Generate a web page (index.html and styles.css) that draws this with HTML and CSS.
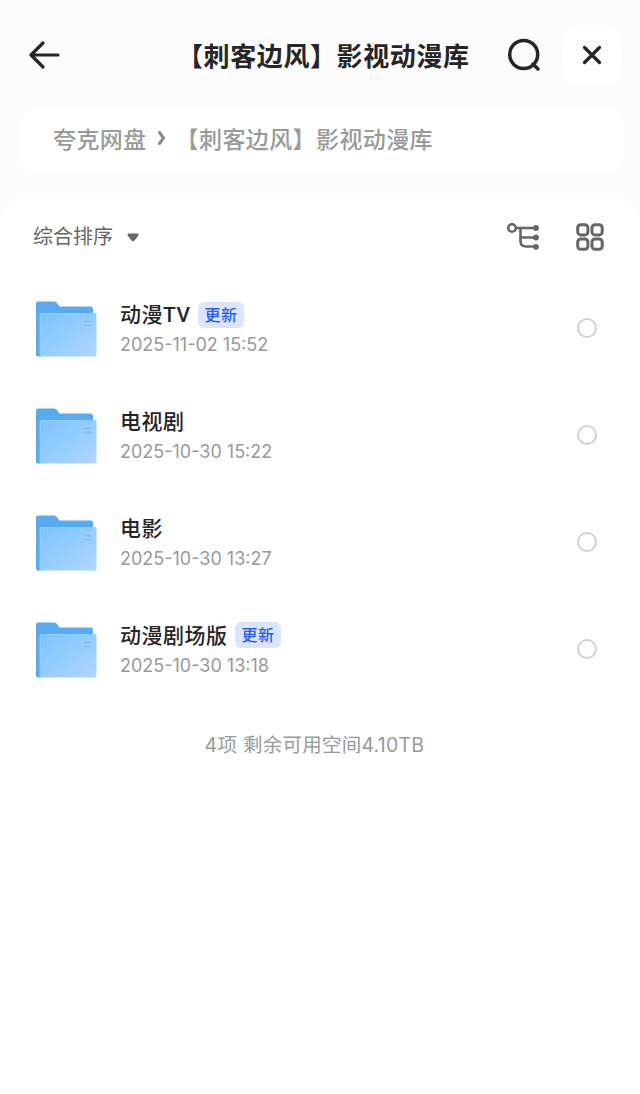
FILE: index.html
```html
<!DOCTYPE html>
<html lang="zh-CN">

<head>
    <meta charset="UTF-8">
    <meta name="viewport" content="width=device-width, initial-scale=1.0">
    <title>【刺客边风】影视动漫库</title>
    <link rel="stylesheet" href="styles.css">
</head>

<body>

    <!-- 文件夹图标 -->
    <svg class="defs" width="0" height="0">
        <defs>
            <linearGradient id="front" x1="0" y1="0" x2="1" y2="1">
                <stop offset="0" stop-color="#7cc3fb" />
                <stop offset="0.5" stop-color="#94cdff" />
                <stop offset="1" stop-color="#b2d5ff" />
            </linearGradient>
            <symbol id="folder" viewBox="0 0 61 56">
                <path d="M0 2.5Q0 .5 2 .5H18.5Q20 .5 21 2L23.5 5.5H54.5Q57 5.5 57 8V54H2Q0 54 0 52Z" fill="#56abf3" />
                <path d="M0 20H6V55.5H2Q0 55.5 0 53.5Z" fill="#56abf3" />
                <rect x="3.5" y="12" width="57" height="43.5" rx="2" fill="url(#front)" />
                <path d="M4.5 54V14Q4.500 12.500 6 12.500H59" fill="none" stroke="#93cefb" stroke-width="1" />
                <path d="M49 20.500H54M49 24.500H51M52.500 24.500H54.500" fill="none" stroke="#7fb9ee" stroke-width="1.500" />
            </symbol>
        </defs>
    </svg>

    <header class="header">
        <svg class="back" width="34" height="30" viewBox="0 0 34 30">
            <path d="M16 3L4 15L16 27M4 15H31" />
        </svg>
        <h1>【刺客边风】影视动漫库</h1>
        <svg class="search" width="36" height="36" viewBox="0 0 36 36">
            <circle cx="17.700" cy="17.500" r="14" />
            <path d="M27 27L32 32" />
        </svg>
        <div class="close">
            <svg width="20" height="20" viewBox="0 0 20 20">
                <path d="M2.500 2.500L17.500 17.500M17.500 2.500L2.500 17.500" />
            </svg>
        </div>
    </header>

    <nav class="crumbs">
        <span>夸克网盘</span>
        <svg width="8" height="14" viewBox="0 0 8 14">
            <path d="M1.500 1.500L5.500 7L1.500 12.500" />
        </svg>
        <span>【刺客边风】影视动漫库</span>
    </nav>

    <main class="sheet">
        <div class="toolbar">
            <span class="sort">综合排序</span>
            <svg class="caret" width="12" height="9" viewBox="0 0 12 9">
                <path d="M2 .5H10Q12.500 .5 11 3L7.500 7.500Q6 9 4.500 7.500L1 3Q-.5 .5 2 .5Z" />
            </svg>
            <svg class="tree" width="34" height="30" viewBox="0 0 34 30">
                <circle cx="6" cy="6" r="3.800" />
                <path d="M10 6H29M14.500 6V19Q14.500 24.500 20 24.500H29M14.500 15.500H29" />
                <circle class="dot" cx="30" cy="6" r="2.900" />
                <circle class="dot" cx="30" cy="15.500" r="2.900" />
                <circle class="dot" cx="30" cy="24.800" r="2.900" />
            </svg>
            <svg class="grid" width="28" height="28" viewBox="0 0 28 28">
                <rect x="1.700" y="1.700" width="10.200" height="10.200" rx="3" />
                <rect x="16" y="1.700" width="10.200" height="10.200" rx="3" />
                <rect x="1.700" y="16" width="10.200" height="10.200" rx="3" />
                <rect x="16" y="16" width="10.200" height="10.200" rx="3" />
            </svg>
        </div>

        <ul class="files">
            <li>
                <svg class="folder" width="61" height="56"><use href="#folder" /></svg>
                <div class="info">
                    <div class="name">动漫TV<span class="tag">更新</span></div>
                    <div class="date">2025-11-02 15:52</div>
                </div>
                <span class="check"></span>
            </li>
            <li>
                <svg class="folder" width="61" height="56"><use href="#folder" /></svg>
                <div class="info">
                    <div class="name">电视剧</div>
                    <div class="date">2025-10-30 15:22</div>
                </div>
                <span class="check"></span>
            </li>
            <li>
                <svg class="folder" width="61" height="56"><use href="#folder" /></svg>
                <div class="info">
                    <div class="name">电影</div>
                    <div class="date">2025-10-30 13:27</div>
                </div>
                <span class="check"></span>
            </li>
            <li>
                <svg class="folder" width="61" height="56"><use href="#folder" /></svg>
                <div class="info">
                    <div class="name">动漫剧场版<span class="tag">更新</span></div>
                    <div class="date">2025-10-30 13:18</div>
                </div>
                <span class="check"></span>
            </li>
        </ul>

        <p class="total">4项 剩余可用空间4.10TB</p>
    </main>

</body>

</html>
```
FILE: styles.css
```css
* {
    box-sizing: border-box;
}

body {
    margin: 0;
    min-height: 100vh;
    display: flex;
    flex-direction: column;
    background: #fdfcfd;
    font-family: Inter, "Noto Sans CJK SC", sans-serif;
    color: #262626;
}

.defs {
    position: absolute;
}

svg {
    display: block;
    flex-shrink: 0;
    fill: none;
    stroke-linecap: round;
    stroke-linejoin: round;
}

.header {
    display: flex;
    align-items: center;
    height: 108px;
    padding: 2px 19px 0 27px;
    stroke: #262626;
}

.header svg {
    stroke-width: 3.2;
}

h1 {
    margin: 0 0 0 116px;
    font-family: "Noto Sans CJK SC", sans-serif;
    font-size: 26px;
    font-weight: 700;
    line-height: 36px;
    letter-spacing: 0.6px;
    white-space: nowrap;
    stroke: none;
}

.header .search {
    margin-left: auto;
    stroke-width: 3.5;
}

.close {
    display: flex;
    align-items: center;
    justify-content: center;
    width: 58px;
    height: 58px;
    margin-left: 21px;
    border-radius: 18px;
    background: #ffffff;
}

.crumbs {
    display: flex;
    align-items: center;
    height: 65px;
    margin: 0 16px 0 20px;
    padding: 0 33px 5px;
    border-radius: 20px;
    background: #ffffff;
    font-family: "Noto Sans CJK SC", sans-serif;
    font-size: 23px;
    font-weight: 500;
    line-height: 32px;
    letter-spacing: 0.4px;
    white-space: nowrap;
    color: #999b99;
}

.crumbs svg {
    margin: 0 10px 0 11px;
    stroke: #8a8c8a;
    stroke-width: 3;
}

.sheet {
    flex: 1;
    margin-top: 25px;
    border-radius: 26px 26px 0 0;
    background: #ffffff;
}

.toolbar {
    display: flex;
    align-items: center;
    height: 77px;
    padding: 0 36px 0 33px;
    color: #666666;
}

.sort {
    font-size: 20px;
    line-height: 28px;
}

.caret {
    margin: 1px 0 0 14px;
    fill: #666666;
}

.tree {
    margin-left: auto;
    stroke: #666666;
    stroke-width: 2.6;
}

.tree .dot {
    fill: #666666;
    stroke: none;
}

.grid {
    margin-left: 36px;
    stroke: #666666;
    stroke-width: 3;
}

.files {
    margin: 0;
    padding: 0;
    list-style: none;
}

.files li {
    display: flex;
    align-items: center;
    height: 106.8px;
    padding: 0 43px 0 36px;
}

.folder {
    margin-top: 2px;
}

.info {
    flex: 1;
    margin-left: 23px;
}

.name {
    display: flex;
    align-items: center;
    height: 30px;
    font-family: Roboto, "Noto Sans CJK SC", sans-serif;
    font-size: 21px;
    font-weight: 500;
    letter-spacing: 0.5px;
}

.tag {
    height: 26px;
    margin: 3px 0 0 7px;
    padding: 0 6px 0 7px;
    border-radius: 6px;
    background: #dce5fe;
    color: #285cf0;
    font-size: 16px;
    line-height: 27px;
}

.date {
    padding-top: 2px;
    margin-bottom: -2px;
    font-size: 18px;
    line-height: 30px;
    color: #999999;
}

.check {
    width: 20px;
    height: 20px;
    border: 2px solid #cfd1d3;
    border-radius: 50%;
}

.total {
    margin: 29px 11px 0 0;
    font-size: 19.5px;
    line-height: 28px;
    letter-spacing: 0.25px;
    text-align: center;
    color: #999999;
}
```
